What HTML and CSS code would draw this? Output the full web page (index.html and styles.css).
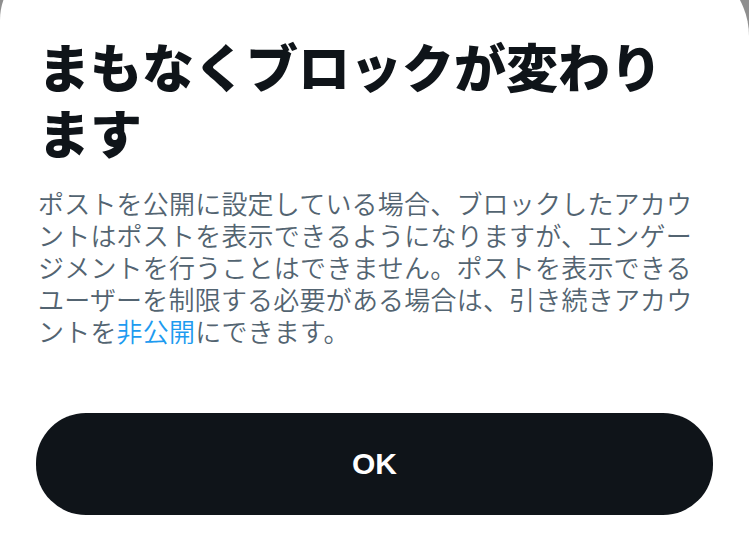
FILE: index.html
```html
<!DOCTYPE html>
<html lang="ja">
<head>
    <meta charset="UTF-8">
    <meta name="viewport" content="width=device-width, initial-scale=1.0">
    <title>ブロックの変更</title>
    <link rel="stylesheet" href="styles.css">
</head>
<body>
    <div class="sheet">
        <h1 class="sheet-title">まもなくブロックが変わります</h1>
        <p class="sheet-text">ポストを公開に設定している場合、ブロックしたアカウントはポストを表示できるようになりますが、エンゲージメントを行うことはできません。ポストを表示できるユーザーを制限する必要がある場合は、引き続きアカウントを<a href="#protect">非公開</a>にできます。</p>
        <button class="ok-button" type="button">OK</button>
    </div>
</body>
</html>
```

FILE: styles.css
```css
html, body {
    margin: 0;
    padding: 0;
    height: 100%;
    overflow: hidden;
}
body {
    background-color: #8f8f8f;
    font-family: "Noto Sans CJK JP", "Liberation Sans", sans-serif;
}
.sheet {
    box-sizing: border-box;
    background-color: #fff;
    margin-top: -40px;
    padding: 73px 36px 40px;
    height: calc(100% + 40px);
    border-radius: 60px 76px 0 0;
}
.sheet-title {
    margin: 0 0 22px;
    padding-left: 2px;
    font-size: 52px;
    line-height: 66px;
    font-weight: 800;
    color: #0f1419;
}
.sheet-text {
    margin: 0;
    padding-left: 2px;
    font-size: 26px;
    line-height: 32px;
    letter-spacing: 0.2px;
    font-weight: 350;
    color: #536471;
}
.sheet-text a {
    color: #1d9bf0;
    text-decoration: none;
}
.ok-button {
    display: block;
    width: 100%;
    height: 102px;
    margin-top: 66px;
    border: none;
    border-radius: 50px;
    background-color: #0f1419;
    color: #fff;
    font-family: "Liberation Sans", Arial, sans-serif;
    font-size: 30px;
    font-weight: 700;
    cursor: pointer;
}
```
